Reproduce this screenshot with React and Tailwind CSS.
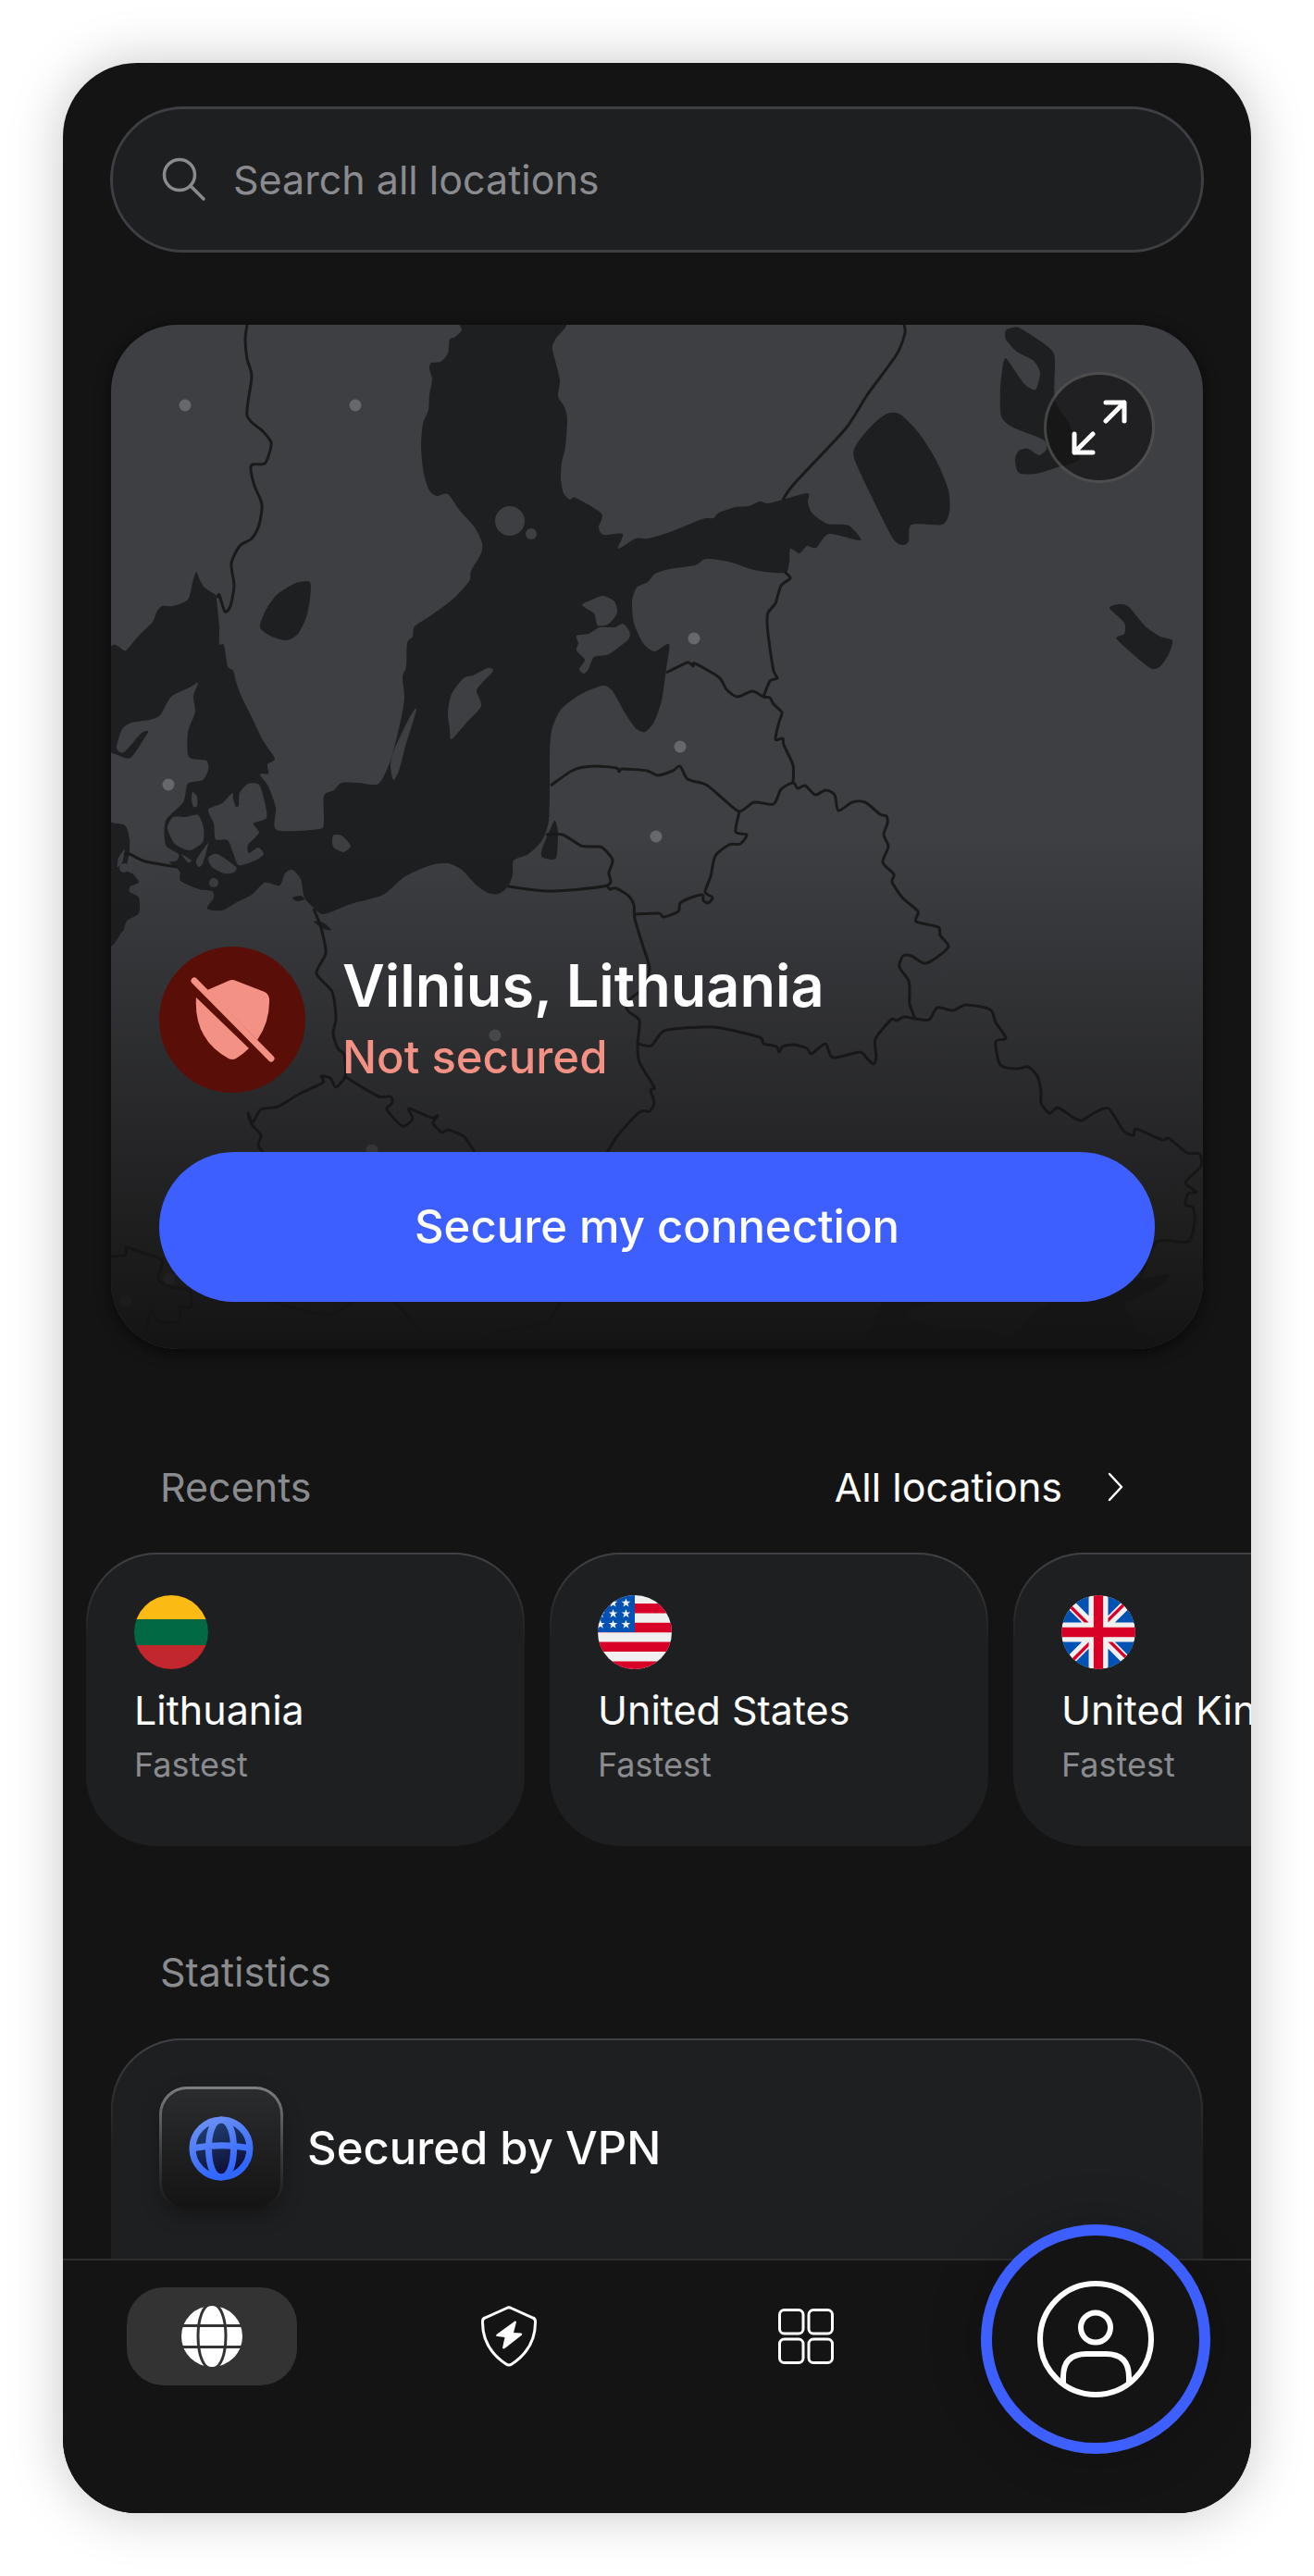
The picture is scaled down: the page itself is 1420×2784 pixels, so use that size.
import { useState } from 'react';

const SEA = [
  // Baltic, Gulf of Bothnia and Kattegat
  '383,-6 379,6 372,13 366,16 364,31 356,40 346,41 344,47 347,59 344,76 343,92 337,107 335,132 338,161 344,179 352,185 364,183 377,201 393,219 401,236 400,247 389,266 387,277 370,296 346,314 328,326 326,337 320,344 319,369 315,381 317,404 312,432 302,471 289,496 267,495 249,495 241,503 230,509 230,536 225,545 179,546 178,522 170,499 161,486 170,485 169,475 177,469 164,449 152,424 142,404 136,389 132,374 126,369 122,346 117,345 117,326 114,297 113,292 101,284 96,276 92,267 88,279 83,297 67,304 55,304 49,311 45,321 30,336 16,352 -4,366 -6,655 12,656 17,644 30,636 30,619 20,613 21,607 30,602 20,584 71,589 75,601 95,610 109,612 111,619 104,631 120,633 136,624 152,616 166,603 182,606 188,593 196,589 205,599 209,619 219,630 230,637 259,626 294,616 318,596 346,584 364,582 379,589 393,604 407,614 419,615 429,607 434,594 435,579 451,572 466,557 473,536 474,499 474,466 476,439 486,416 508,399 532,390 542,396 555,419 567,436 577,440 587,429 595,406 600,372 603,345 587,353 575,344 565,322 563,299 568,284 580,278 588,269 604,264 631,260 643,253 667,256 695,265 716,268 730,267 733,256 734,242 744,247 752,239 762,241 776,226 810,233 797,217 774,215 758,204 753,192 753,182 726,189 710,193 701,191 689,196 675,197 657,203 651,209 639,210 604,224 580,231 567,231 548,242 553,226 532,227 527,219 530,204 502,187 496,189 489,182 486,166 487,149 491,132 493,102 490,89 483,77 485,59 477,26 480,16 489,-6',
  '215,278 200,279 180,291 168,307 161,327 174,337 190,341 202,334 211,316 215,296',
  '480,536 476,542 466,566 465,574 470,577 481,576 483,549',
  '839,96 853,97 873,117 892,147 905,179 906,202 898,216 865,216 862,234 855,238 845,231 825,192 803,144 807,127 825,106',
  '981,3 999,14 1015,26 1020,37 1020,82 1035,106 1047,144 1023,154 999,161 981,160 977,146 981,136 991,134 1003,141 1011,134 1007,124 975,111 962,99 961,69 964,42 967,36 973,44 987,64 999,70 1004,52 997,39 979,29 967,16 967,6 975,3',
  '1079,306 1090,302 1100,305 1118,326 1134,337 1147,341 1143,356 1134,369 1128,372 1120,369 1087,340 1095,334 1095,322',
  '196,619 205,617 209,621 201,623',
  '219,645 229,646 238,654 230,653',
  '983,1107 983,1085 1007,1062 1060,1030 1112,1031 1141,1026 1137,1036 1110,1052 1095,1060 1110,1085 1130,1107',
  '817,1107 822,1080 838,1055 880,1050 889,1058 862,1066 880,1080 960,1090 983,1107',
];

const LAND = [
  // Jutland
  '94,387 89,401 91,416 89,424 83,441 84,467 103,471 105,481 99,492 83,496 78,516 59,536 59,562 73,572 71,579 63,581 71,587 72,594 20,592 20,569 20,556 15,541 -5,532 -5,466 4,464 21,468 39,442 39,439 32,442 14,462 6,457 12,437 22,430 41,427 53,422 65,402 85,392',
  // Zealand, Funen and the small Danish islands
  '131,506 120,517 105,524 111,539 113,556 126,557 132,571 138,584 156,579 165,572 159,565 149,571 148,562 160,549 154,539 168,533 166,516 160,497 148,496 139,506 138,519 135,521 132,512',
  '61,544 67,532 81,532 94,530 100,544 99,559 85,568 69,561',
  '105,576 115,572 135,586 132,592 122,593 109,586',
  '105,560 92,579 95,586 99,582',
  '76,572 87,579 83,581',
  '15,567 8,576 7,586 12,581',
  '88,505 93,510 93,520 89,521 87,513',
  // Bornholm, Oland, Gotland
  '240,552 249,552 259,563 251,570 240,564',
  '330,416 324,422 306,459 302,476 305,492 311,482 318,456',
  '413,374 407,371 391,379 381,382 368,399 364,419 366,437 368,448 385,429 400,412 395,396 401,387',
  // Hiiumaa, Saaremaa
  '509,303 520,297 532,293 544,299 547,311 538,323 526,325 522,312',
  '503,336 516,334 528,327 544,327 553,323 560,331 559,340 538,356 522,359 516,372 511,377 506,372 512,362 503,352 505,344',
];

const ISLETS = [
  { x: 431, y: 212, r: 16 },
  { x: 454, y: 226, r: 6 },
  { x: 111, y: 603, r: 5 },
  { x: 14, y: 587, r: 5 },
];

const BORDERS = [
  '147,0 145,16 147,37 152,56 147,98 164,115 173,127 171,139 166,150 153,151 151,156 155,174 163,194 160,216 152,231 139,239 130,258 133,282 129,304 123,310 117,292 115,295',
  '857,0 858,9 849,32 817,76 794,112 738,172 726,189',
  '728,267 734,274 724,282 718,301 710,311 709,322 711,342 716,374 720,382 712,385 705,402',
  '600,376 623,365 629,369 631,366 657,381 665,394 677,402 693,396 705,402 712,403 716,410 725,419 722,429 718,448 726,447 727,454 737,476 737,495',
  '475,498 500,481 522,477 546,479 549,483 553,480 579,482 591,487 607,482 615,477 623,491 643,497 661,512 679,526 695,516 716,518 724,502 737,495 742,501 750,498 761,508 772,503 782,508 786,525 801,516 815,516 831,529 838,531 839,539 835,551 840,564 834,581 846,594 844,602 855,619 872,634 870,645 894,651 896,660 905,672 892,684 880,690 871,686 865,682 856,682 852,694 862,709 863,722 863,734 869,750',
  '679,526 675,548 687,551 680,561 668,562 653,574 648,596 642,613 650,619 645,625 640,622 639,616 627,619 615,625 613,634 597,640 592,636 566,637',
  '429,607 474,612 536,606 538,592 542,578 531,565 524,564 508,563 488,551 470,551',
  '536,606 539,610 546,609 559,617 565,627 566,642 575,672 582,696 575,717 557,732 559,742 571,752 569,777 571,797 587,824 583,827 587,841 582,850 571,851 547,877 530,905',
  '569,777 584,779 598,763 639,759 659,760 701,770 705,777 719,780 722,786 726,780 738,778 752,782 757,788 772,777 780,792 809,786 817,793 824,799 827,791 826,772 843,751 849,752 857,748 869,750 884,751 893,738 910,741 924,735 950,740 956,754 967,771 956,775 961,800 979,804 991,802 1001,812 1005,829 1005,841 1014,852 1023,846 1039,856 1049,860 1062,852 1078,847 1094,871 1105,876 1108,869 1136,881 1143,879 1163,895 1176,896 1178,909 1161,927 1173,937 1164,939 1161,951 1169,954 1171,969 1164,991 1130,991 1112,1031',
  '219,631 227,652 232,679 222,701 239,721 243,749 240,766 245,782 252,789 253,812 243,824 237,814 227,812 229,819 204,831 180,845 162,848 153,862 148,852 152,864 162,876 159,886 164,894 180,910',
  '252,812 263,819 289,834 302,834 304,841 298,848 315,866 326,858 322,847 346,857 353,855 348,863 358,873 364,870 381,877 393,894',
  '14,573 20,572 37,580 71,586',
  '0,1007 16,1005 16,997 32,1002 55,1011 51,1032 65,1040 85,1044 86,1062 74,1061 74,1077 51,1077 43,1066 38,1090',
  '172,1056 236,1070 270,1050 300,1050 345,1100',
  '485,1056 470,1078 420,1088 380,1107',
];

const SERVERS = [
  [80, 87], [264, 87], [630, 339], [615, 456], [589, 553],
  [62, 497], [415, 768], [282, 892], [63, 1031], [16, 1056],
];

// Catmull-Rom spline through the listed points
function spline(str, closed) {
  const pts = str.split(' ').map((p) => p.split(',').map(Number));
  const n = pts.length;
  const at = (i) => (closed ? pts[(i + n) % n] : pts[Math.max(0, Math.min(n - 1, i))]);
  let d = `M${pts[0][0]} ${pts[0][1]}`;
  for (let i = 0; i < (closed ? n : n - 1); i++) {
    const [a, b, c, e] = [at(i - 1), at(i), at(i + 1), at(i + 2)];
    d += `C${b[0] + (c[0] - a[0]) / 8} ${b[1] + (c[1] - a[1]) / 8} ${c[0] - (e[0] - b[0]) / 8} ${c[1] - (e[1] - b[1]) / 8} ${c[0]} ${c[1]}`;
  }
  return closed ? d + 'Z' : d;
}

function BalticMap() {
  return (
    <svg
      viewBox="0 0 1180 1107"
      preserveAspectRatio="xMidYMid slice"
      className="absolute inset-0 w-full h-full"
      aria-hidden="true"
    >
      <defs>
        <linearGradient id="mapFade" x1="0" y1="0" x2="0" y2="1">
          <stop offset="0.5" stopColor="#141414" stopOpacity="0" />
          <stop offset="1" stopColor="#141414" />
        </linearGradient>
      </defs>
      <rect width="1180" height="1107" fill="#3e3f43" />
      {SEA.map((p) => <path key={p} d={spline(p, true)} fill="#1e1f21" />)}
      {LAND.map((p) => <path key={p} d={spline(p, true)} fill="#3e3f43" />)}
      {ISLETS.map(({ x, y, r }) => <circle key={x} cx={x} cy={y} r={r} fill="#3e3f43" />)}
      {BORDERS.map((p) => (
        <path key={p} d={spline(p, false)} fill="none" stroke="#1a1a1b" strokeWidth="3" strokeLinejoin="round" />
      ))}
      {SERVERS.map(([x, y]) => <circle key={`${x}-${y}`} cx={x} cy={y} r="6.5" fill="#67686c" />)}
      <rect width="1180" height="1107" fill="url(#mapFade)" />
    </svg>
  );
}

function FlagLithuania() {
  return (
    <svg viewBox="0 0 512 512" className="w-20 h-20 rounded-full" aria-hidden="true">
      <path fill="#fcba15" d="M0 0h512v168H0z" />
      <path fill="#016a44" d="M0 168h512v178H0z" />
      <path fill="#c1272d" d="M0 346h512v166H0z" />
    </svg>
  );
}

const STAR = '0,-28 7,-9 27,-9 11,3 17,23 0,11 -17,23 -11,3 -27,-9 -7,-9';
const STARS = [[18, 54], [106, 54], [195, 54], [18, 128], [106, 128], [195, 128], [18, 203], [106, 203], [195, 203]];

function FlagUS() {
  return (
    <svg viewBox="0 0 512 512" className="w-20 h-20 rounded-full" aria-hidden="true">
      <path fill="#f0f0f0" d="M0 0h512v512H0z" />
      <path fill="#d80027" d="M0 57h512v67H0zM0 190h512v67H0zM0 323h512v67H0zM0 457h512v55H0z" />
      <path fill="#0052b4" d="M0 0h256v256H0z" />
      {STARS.map(([x, y]) => (
        <polygon key={`${x}-${y}`} points={STAR} transform={`translate(${x} ${y}) scale(1.15)`} fill="#f0f0f0" />
      ))}
    </svg>
  );
}

function FlagUK() {
  return (
    <svg viewBox="0 0 512 512" className="w-20 h-20 rounded-full" aria-hidden="true">
      <circle cx="256" cy="256" r="256" fill="#f0f0f0" />
      <path
        fill="#0052b4"
        d="M53 100C33 126 18 156 9 189h133zM503 189c-9-33-24-63-44-89l-89 89zM9 323c9 33 24 63 44 89l89-89zM412 53c-26-20-56-35-89-44v133zM100 459c26 20 56 35 89 44V370zM189 9c-33 9-63 24-89 44l89 89zM323 503c33-9 63-24 89-44l-89-89zM370 323l89 89c20-26 35-56 44-89z"
      />
      <path
        fill="#d80027"
        d="M510 223H289V2a259 259 0 0 0-66 0v221H2a259 259 0 0 0 0 66h221v221a259 259 0 0 0 66 0V289h221a259 259 0 0 0 0-66zM323 323l114 114a256 256 0 0 0 15-16l-98-98zM189 323L75 437a256 256 0 0 0 16 15l98-98zM189 189L75 75a256 256 0 0 0-15 16l98 98zM323 189L437 75a256 256 0 0 0-16-15l-98 98z"
      />
    </svg>
  );
}

function ShieldOffBadge() {
  return (
    <svg viewBox="0 0 158 158" className="w-[158px] h-[158px] shrink-0" aria-hidden="true">
      <circle cx="79" cy="79" r="79" fill="#5a0e08" />
      <g fill="#f49185">
        <path d="M52 47L75 37Q79 35 83 37L114 49Q118 51 119 56Q120 81 106 101Z" />
        <path d="M40 55L97 110Q91 116 83 121Q79 123 75 121Q37 100 40 55Z" />
      </g>
      <path d="M38 37L121 121" stroke="#f49185" strokeWidth="7" strokeLinecap="round" />
    </svg>
  );
}

function GlobeTile() {
  return (
    <div className="flex items-center justify-center w-[134px] h-[134px] rounded-[30px] border-3 border-transparent shadow-[0_8px_20px_rgba(0,0,0,0.25)] [background:linear-gradient(#2b2c2e,#141414)_padding-box,linear-gradient(#7d7e80,#3a3b3d_55%,#161617)_border-box]">
      <svg viewBox="0 0 70 70" className="w-[70px] h-[70px]" fill="none" aria-hidden="true">
        <defs>
          <linearGradient id="globeLine" x1="0" y1="0" x2="0.4" y2="1">
            <stop stopColor="#6f93f3" />
            <stop offset="1" stopColor="#2f66ff" />
          </linearGradient>
          <linearGradient id="globeFill" x1="0.2" y1="0" x2="0.6" y2="1">
            <stop stopColor="#1f4474" />
            <stop offset="1" stopColor="#0f0b33" />
          </linearGradient>
        </defs>
        <circle cx="35" cy="35" r="31" fill="url(#globeFill)" stroke="url(#globeLine)" strokeWidth="7" />
        <path
          d="M35 4C26 4 21.500 18 21.500 35S26 66 35 66S48.500 52 48.500 35S44 4 35 4ZM5 34.500Q35 29 65 34.500"
          stroke="url(#globeLine)"
          strokeWidth="7"
        />
      </svg>
    </div>
  );
}

function GlobeSolid() {
  return (
    <svg viewBox="0 0 66 66" className="w-[66px] h-[66px]" aria-hidden="true">
      <circle cx="33" cy="33" r="33" fill="#fff" />
      <path
        d="M33 -2C23 -2 18 15 18 33S23 68 33 68S48 51 48 33S43 -2 33 -2ZM0 21.500H66M0 44.500H66"
        fill="none"
        stroke="#333"
        strokeWidth="3"
      />
    </svg>
  );
}

function ShieldBolt() {
  return (
    <svg viewBox="0 0 66 66" className="w-[66px] h-[66px]" aria-hidden="true">
      <path
        d="M30.500 2.500Q33 1 35.500 2.500L59 13Q61.500 14 61.500 17Q62 46 36 63Q33 65 30 63Q4 46 4.500 17Q4.500 14 7 13Z"
        fill="none"
        stroke="#fff"
        strokeWidth="3"
      />
      <path d="M39.500 16.500L19.500 31Q18.500 33 20.500 33L28.500 34L26 45.500Q27 47 28.500 46L47 31.500Q48 30 46 29.500L38 29L41 17.500Q40.500 16 39.500 16.500Z" fill="#fff" />
    </svg>
  );
}

function AppsGrid() {
  return (
    <svg viewBox="0 0 60 60" className="w-[60px] h-[60px]" fill="none" stroke="#fff" strokeWidth="3" aria-hidden="true">
      <rect x="1.500" y="1.500" width="25.500" height="25.500" rx="5" />
      <rect x="33" y="1.500" width="25.500" height="25.500" rx="5" />
      <rect x="1.500" y="33" width="25.500" height="25.500" rx="5" />
      <rect x="33" y="33" width="25.500" height="25.500" rx="5" />
    </svg>
  );
}

function UserCircle() {
  return (
    <svg viewBox="0 0 126 126" className="w-[126px] h-[126px]" fill="none" stroke="#fff" strokeWidth="6" aria-hidden="true">
      <circle cx="63" cy="63" r="60" />
      <circle cx="63" cy="50.500" r="16" />
      <path d="M28 111V104Q28 79 53 79H74Q99 79 99 104V111" />
    </svg>
  );
}

const recents = [
  { name: 'Lithuania', note: 'Fastest', Flag: FlagLithuania },
  { name: 'United States', note: 'Fastest', Flag: FlagUS },
  { name: 'United Kingdom', note: 'Fastest', Flag: FlagUK },
];

export default function App() {
  const [query, setQuery] = useState('');

  return (
    <div className="min-h-screen bg-white p-[68px] font-['Inter',sans-serif] text-white">
      <main className="flex flex-col overflow-hidden rounded-[80px] bg-[#141414] pt-[47px] shadow-[0_0_60px_rgba(0,0,0,0.22)]">
        <label className="mx-[51px] flex items-center gap-[30px] rounded-full border-3 border-[#3e3f43] bg-[#1e1f21] px-13 py-12">
          <svg viewBox="0 0 48 48" className="w-12 h-12 shrink-0" fill="none" stroke="#8a8b8f" strokeWidth="3.500" strokeLinecap="round" aria-hidden="true">
            <circle cx="20" cy="19" r="16.500" />
            <path d="M32 31L46 45" />
          </svg>
          <input
            type="text"
            value={query}
            onChange={(e) => setQuery(e.target.value)}
            placeholder="Search all locations"
            aria-label="Search all locations"
            className="min-w-0 flex-1 bg-transparent text-[43px] leading-[56px] placeholder:text-[#8a8b8f] focus:outline-none"
          />
        </label>

        <section className="relative mx-13 mt-[78px] flex aspect-[1180/1107] flex-col justify-end overflow-hidden rounded-[72px] px-13 pb-[51px] shadow-[0_4px_16px_rgba(0,0,0,0.6)]">
          <BalticMap />
          <button
            type="button"
            aria-label="Expand map"
            className="absolute top-[51px] right-13 flex items-center justify-center w-[120px] h-[120px] rounded-full border-3 border-white/20 bg-[#141414]/70"
          >
            <svg viewBox="0 0 60 60" className="w-[60px] h-[60px]" fill="none" stroke="#fff" strokeWidth="5" strokeLinecap="round" strokeLinejoin="round" aria-hidden="true">
              <path d="M37 3H57V23M57 3L37 23M3 37V57H23M3 57L23 37" />
            </svg>
          </button>

          <div className="relative flex items-center gap-10">
            <ShieldOffBadge />
            <div className="pt-1 leading-[77px]">
              <h1 className="text-[63px] font-semibold">Vilnius, Lithuania</h1>
              <p className="text-[49px] font-medium text-[#f49185]">Not secured</p>
            </div>
          </div>
          <button type="button" className="relative mt-16 h-[162px] rounded-full bg-[#3e5fff] text-[49px] font-medium">
            Secure my connection
          </button>
        </section>

        <div className="mx-13 mt-[121px] flex items-center justify-between px-[53px] text-[43px] leading-[56px]">
          <h2 className="text-[#8a8b8f]">Recents</h2>
          <a href="#locations" className="flex items-center gap-[46px] pr-[29px]">
            All locations
            <svg viewBox="0 0 24 36" className="w-6 h-9" fill="none" stroke="#fff" strokeWidth="2.500" strokeLinecap="round" strokeLinejoin="round" aria-hidden="true">
              <path d="M5 4L18 18L5 32" />
            </svg>
          </a>
        </div>

        <ul className="mt-[43px] flex gap-[27px] overflow-hidden pl-[25px]">
          {recents.map(({ name, note, Flag }) => (
            <li key={name} className="shrink-0">
              <button
                type="button"
                className="flex w-[474px] flex-col items-start rounded-[76px] border-2 border-transparent px-[50px] pt-11 pb-14 text-left [background:linear-gradient(#1e1f21,#1e1f21)_padding-box,linear-gradient(#404144,#1e1f21_30%)_border-box]"
              >
                <Flag />
                <span className="mt-3.5 whitespace-nowrap text-[43px] leading-[60px]">{name}</span>
                <span className="text-[36px] leading-[59px] text-[#8a8b8f]">{note}</span>
              </button>
            </li>
          ))}
        </ul>

        <h2 className="mx-13 mt-[108px] px-[53px] text-[43px] leading-[56px] text-[#8a8b8f]">Statistics</h2>
        <section className="mx-13 mt-11 flex items-center gap-[26px] rounded-t-[76px] border-2 border-b-0 border-transparent px-[50px] pt-[50px] pb-13 [background:linear-gradient(#1e1f21,#1e1f21)_padding-box,linear-gradient(#404144,#1e1f21_50%)_border-box]">
          <GlobeTile />
          <h3 className="text-[49px] font-medium">Secured by VPN</h3>
        </section>

        <nav className="relative grid grid-cols-4 justify-items-center border-t-2 border-[#2e2e2e] bg-[#141414] pt-[29px] pb-[138px]">
          <button type="button" aria-label="Locations" className="flex items-center justify-center w-[184px] h-[106px] rounded-[40px] bg-[#333]">
            <GlobeSolid />
          </button>
          <button type="button" aria-label="Threat protection" className="flex items-center justify-center w-[184px] h-[106px]">
            <ShieldBolt />
          </button>
          <button type="button" aria-label="Products" className="flex items-center justify-center w-[184px] h-[106px]">
            <AppsGrid />
          </button>
          <button
            type="button"
            aria-label="Profile"
            className="absolute -top-[39px] right-11 flex items-center justify-center w-[248px] h-[248px] rounded-full border-12 border-[#3e5fff] bg-[#141414] shadow-[0_0_60px_rgba(0,0,0,0.2)]"
          >
            <UserCircle />
          </button>
        </nav>
      </main>
    </div>
  );
}
